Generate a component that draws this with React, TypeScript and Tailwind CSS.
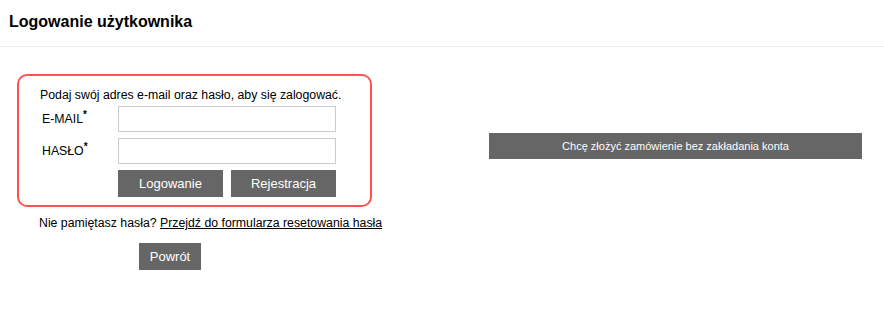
import React from 'react';

function Field({ label, type }: { label: string; type: string }) {
  return (
    <div className="flex items-center">
      <label className="w-[78px] pl-[2px] text-[12.3px] leading-[14px] text-black">
        {label}
        <span className="relative -top-[5px] text-[10px] font-bold">*</span>
      </label>
      <input
        type={type}
        className="h-[26px] w-[218px] border border-[#ccc] bg-white outline-none"
      />
    </div>
  );
}

export default function App() {
  return (
    <div className="h-[310px] w-[884px] bg-white font-['Liberation_Sans',Arial,sans-serif] text-black">
      <div className="h-[47px] border-b border-[#eee] px-[9px] pt-[12px]">
        <h1 className="text-[16px] font-bold leading-[20px]">Logowanie użytkownika</h1>
      </div>

      <div className="flex">
        <div className="w-[400px]">
          <div className="ml-[17px] mt-[27px] h-[133px] w-[355px] rounded-[10px] border-2 border-[#ff5252] pl-[21px] pt-[12px]">
            <p className="text-[12.3px] leading-[14px]">
              Podaj swój adres e-mail oraz hasło, aby się zalogować.
            </p>
            <div className="mt-[4px] flex flex-col gap-[6px]">
              <Field label="E-MAIL" type="email" />
              <Field label="HASŁO" type="password" />
              <div className="ml-[78px] flex gap-[8px]">
                <button className="h-[27px] w-[105px] bg-[#666] text-[13px] text-white">
                  Logowanie
                </button>
                <button className="h-[27px] w-[105px] bg-[#666] text-[13px] text-white">
                  Rejestracja
                </button>
              </div>
            </div>
          </div>

          <p className="ml-[39px] mt-[9px] text-[12.3px] leading-[14px]">
            Nie pamiętasz hasła?{' '}
            <a href="#" className="underline">
              Przejdź do formularza resetowania hasła
            </a>
          </p>

          <button className="ml-[139px] mt-[13px] h-[27px] w-[62px] bg-[#666] text-[13px] text-white">
            Powrót
          </button>
        </div>

        <div className="pl-[89px] pt-[86px]">
          <button className="h-[26px] w-[373px] bg-[#666] text-[11px] text-white">
            Chcę złożyć zamówienie bez zakładania konta
          </button>
        </div>
      </div>
    </div>
  );
}
